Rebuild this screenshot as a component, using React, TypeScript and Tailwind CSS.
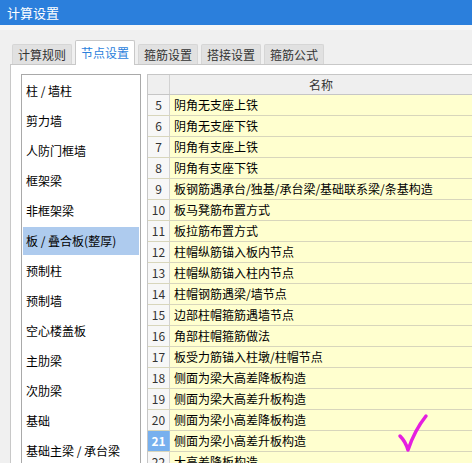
import React from "react";

const tabs = ["计算规则", "节点设置", "箍筋设置", "搭接设置", "箍筋公式"];

const parts = [
  "柱 / 墙柱",
  "剪力墙",
  "人防门框墙",
  "框架梁",
  "非框架梁",
  "板 / 叠合板(整厚)",
  "预制柱",
  "预制墙",
  "空心楼盖板",
  "主肋梁",
  "次肋梁",
  "基础",
  "基础主梁 / 承台梁",
];

const rows: [number, string][] = [
  [5, "阴角无支座上铁"],
  [6, "阴角无支座下铁"],
  [7, "阴角有支座上铁"],
  [8, "阴角有支座下铁"],
  [9, "板钢筋遇承台/独基/承台梁/基础联系梁/条基构造"],
  [10, "板马凳筋布置方式"],
  [11, "板拉筋布置方式"],
  [12, "柱帽纵筋锚入板内节点"],
  [13, "柱帽纵筋锚入柱内节点"],
  [14, "柱帽钢筋遇梁/墙节点"],
  [15, "边部柱帽箍筋遇墙节点"],
  [16, "角部柱帽箍筋做法"],
  [17, "板受力筋锚入柱墩/柱帽节点"],
  [18, "侧面为梁大高差降板构造"],
  [19, "侧面为梁大高差升板构造"],
  [20, "侧面为梁小高差降板构造"],
  [21, "侧面为梁小高差升板构造"],
  [22, "大高差降板构造"],
];

export default function App() {
  const activeTab = 1;
  const activePart = 5;
  const activeRow = 21;

  return (
    <div
      className="relative w-[472px] h-[463px] overflow-hidden bg-[#f0f0f0] text-[12px]"
      style={{ fontFamily: '"Noto Sans CJK SC", "Noto Sans", sans-serif' }}
    >
      {/* title bar */}
      <div className="h-[25px] bg-[#2b7fdc] pl-[7px] text-[13px] leading-[25px] text-white">
        计算设置
      </div>
      <div className="h-[5px] bg-[#f6f6f6]" />

      <div className="pl-[10px] pt-[10px]">
        {/* tabs */}
        <div className="flex items-end gap-[3px] pl-[2px] h-[24px]">
          {tabs.map((t, i) =>
            i === activeTab ? (
              <div
                key={t}
                className="relative z-10 -mb-px h-[25px] w-[60px] rounded-t-[2px] border border-b-0 border-[#c8c8c8] bg-white text-center leading-[24px] text-[#2b7fdc]"
              >
                {t}
              </div>
            ) : (
              <div
                key={t}
                className="h-[20px] w-[60px] rounded-t-[2px] border border-b-0 border-[#d6d6d6] bg-[#e1e1e1] text-center leading-[20px] text-[#333]"
              >
                {t}
              </div>
            )
          )}
        </div>

        {/* panel */}
        <div className="flex h-[400px] gap-[6px] border-l border-t border-[#c8c8c8] bg-white pl-[10px] pt-[9px]">
          {/* part list */}
          <div className="w-[120px] shrink-0 border border-b-0 border-[#a9a9a9] pt-px">
            {parts.map((p, i) => (
              <div key={p} className="h-[30px] px-px py-px">
                <div
                  className={`h-[28px] pl-[3px] leading-[28px] text-black ${
                    i === activePart ? "bg-[#aecbee]" : ""
                  }`}
                >
                  {p}
                </div>
              </div>
            ))}
          </div>

          {/* node table */}
          <div className="flex-1 border-l border-t border-[#c6c6c6]">
            <div className="flex h-[20px] border-b border-[#c6c6c6] bg-[#efefef]">
              <div className="w-[22px] shrink-0 border-r border-[#d2d2d2]" />
              <div className="flex-1 text-center leading-[20px] text-[#333]">名称</div>
            </div>
            {rows.map(([n, name]) => (
              <div key={n} className="flex h-[21px] border-b border-[#d8d6bc]">
                <div
                  className={`w-[22px] shrink-0 border-r text-center leading-[20px] ${
                    n === activeRow
                      ? "border-[#8fbcef] bg-[#78b0ee] font-bold text-white"
                      : "border-[#d2d2d2] bg-[#f7f7f7] text-[#333]"
                  }`}
                >
                  {n}
                </div>
                <div className="flex-1 whitespace-nowrap bg-[#ffffcf] pl-[4px] leading-[20px] text-black">
                  {name}
                </div>
              </div>
            ))}
          </div>
        </div>
      </div>

      {/* hand-drawn check mark */}
      <svg
        className="absolute left-[396px] top-[410px]"
        width="36"
        height="46"
        viewBox="0 0 36 46"
      >
        <path
          d="M4 26 C7 29 10 33 12 40 C16 28 22 16 30 6"
          fill="none"
          stroke="#e51fe0"
          strokeWidth="3.5"
          strokeLinecap="round"
          strokeLinejoin="round"
        />
      </svg>
    </div>
  );
}
